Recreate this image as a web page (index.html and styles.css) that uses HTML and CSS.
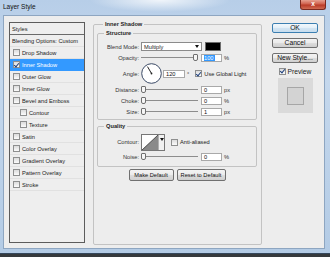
FILE: index.html
```html
<!DOCTYPE html>
<html lang="en">
<head>
  <meta charset="UTF-8">
  <title>Layer Style</title>
  <link rel="stylesheet" href="styles.css">
</head>
<body>
  <div class="window">
    <div class="titlebar">
      <span class="title">Layer Style</span>
      <span class="close">x</span>
    </div>

    <div class="client">
      <ul class="styles-list">
        <li class="head top">Styles</li>
        <li class="head">Blending Options: Custom</li>
        <li><span class="cb"></span>Drop Shadow</li>
        <li class="active"><span class="cb checked"></span>Inner Shadow</li>
        <li><span class="cb"></span>Outer Glow</li>
        <li><span class="cb"></span>Inner Glow</li>
        <li><span class="cb"></span>Bevel and Emboss</li>
        <li class="sub"><span class="cb"></span>Contour</li>
        <li class="sub"><span class="cb"></span>Texture</li>
        <li><span class="cb"></span>Satin</li>
        <li><span class="cb"></span>Color Overlay</li>
        <li><span class="cb"></span>Gradient Overlay</li>
        <li><span class="cb"></span>Pattern Overlay</li>
        <li><span class="cb"></span>Stroke</li>
      </ul>

      <fieldset class="panel">
        <legend>Inner Shadow</legend>

        <fieldset class="group structure">
          <legend>Structure</legend>
          <div class="row">
            <span class="lbl">Blend Mode:</span>
            <div class="select">Multiply</div>
            <div class="color"></div>
          </div>
          <div class="row">
            <span class="lbl">Opacity:</span>
            <div class="slider end"><span class="thumb"></span></div>
            <div class="field"><span class="sel">100</span></div>
            <span class="unit">%</span>
          </div>
          <div class="row angle-row">
            <span class="lbl">Angle:</span>
            <svg class="dial" width="21" height="21" viewBox="0 0 21 21">
              <circle cx="10.5" cy="10.5" r="9.8" fill="#fff" stroke="#3b4a66" stroke-width="1"/>
              <line x1="10.5" y1="10.5" x2="6.5" y2="3.6" stroke="#222" stroke-width="1"/>
              <circle cx="10.5" cy="10.5" r="0.9" fill="#222"/>
            </svg>
            <div class="field angle">120</div>
            <span class="unit">°</span>
            <label class="check global"><span class="cb checked"></span>Use Global Light</label>
          </div>
          <div class="row">
            <span class="lbl">Distance:</span>
            <div class="slider"><span class="thumb"></span></div>
            <div class="field">0</div>
            <span class="unit">px</span>
          </div>
          <div class="row">
            <span class="lbl">Choke:</span>
            <div class="slider"><span class="thumb"></span></div>
            <div class="field">0</div>
            <span class="unit">%</span>
          </div>
          <div class="row">
            <span class="lbl">Size:</span>
            <div class="slider"><span class="thumb"></span></div>
            <div class="field">1</div>
            <span class="unit">px</span>
          </div>
        </fieldset>

        <fieldset class="group quality">
          <legend>Quality</legend>
          <div class="row contour-row">
            <span class="lbl">Contour:</span>
            <div class="contour">
              <svg width="16" height="15" viewBox="0 0 16 15">
                <polygon points="0,15 16,0 16,15" fill="#8a8a8a"/>
                <line x1="0" y1="15" x2="16" y2="0" stroke="#333" stroke-width="0.8"/>
              </svg>
              <span class="drop"></span>
            </div>
            <label class="check anti"><span class="cb"></span>Anti-aliased</label>
          </div>
          <div class="row">
            <span class="lbl">Noise:</span>
            <div class="slider"><span class="thumb"></span></div>
            <div class="field">0</div>
            <span class="unit">%</span>
          </div>
        </fieldset>

        <div class="defaults">
          <button class="make">Make Default</button>
          <button class="reset">Reset to Default</button>
        </div>
      </fieldset>

      <div class="actions">
        <button class="default">OK</button>
        <button>Cancel</button>
        <button>New Style...</button>
        <label class="check preview"><span class="cb checked"></span>Preview</label>
        <div class="swatch"><div class="swatch-inner"></div></div>
      </div>
    </div>
  </div>
</body>
</html>
```

FILE: styles.css
```css
* {
  margin: 0;
  padding: 0;
  box-sizing: border-box;
}

body {
  width: 330px;
  height: 257px;
  overflow: hidden;
  background: #35393c;
  font-family: 'Liberation Sans', Arial, sans-serif;
  font-size: 5.7px;
  color: #222;
}

.window {
  height: 254px;
  background: linear-gradient(to bottom, #b7cee8 0, #c5d8ed 30%, #b3cbe5 100%);
  border-bottom: 1px solid #34475c;
}

.titlebar {
  height: 15px;
  display: flex;
  justify-content: space-between;
  align-items: flex-start;
  padding-left: 3px;
  background: radial-gradient(ellipse 70px 12px at 160px 0, rgba(255,255,255,0.8), rgba(255,255,255,0));
}

.title {
  font-size: 6.5px;
  line-height: 14px;
  color: #111;
}

.close {
  width: 26px;
  height: 10px;
  margin-right: 4px;
  background: linear-gradient(to bottom, #e6a090 0, #d0614d 45%, #b93b27 55%, #cf6a52 100%);
  border: 1px solid #7b2a1f;
  border-top: none;
  border-radius: 0 0 3px 3px;
  color: #fff;
  font-size: 6.5px;
  font-weight: bold;
  line-height: 8px;
  text-align: center;
}

.client {
  margin-left: 3px;
  width: 322px;
  height: 234px;
  background: #ededed;
  border: 1px solid #8ea6c1;
  display: flex;
  align-items: flex-start;
  padding-top: 4px;
}

/* left list of effects */
.styles-list {
  list-style: none;
  margin: 2px 0 0 5px;
  width: 76px;
  height: 221px;
  border: 1px solid #5c5c5c;
  background: #eeeeee;
}

.styles-list li {
  height: 12px;
  display: flex;
  align-items: center;
  gap: 2px;
  padding-left: 3px;
  border-bottom: 1px solid #e1e1e1;
  white-space: nowrap;
}

.styles-list li.head {
  padding-left: 2px;
}

.styles-list li.top {
  border-bottom-color: #6a6a6a;
}

.styles-list li.sub {
  padding-left: 10px;
}

.styles-list li.active {
  background: #3399ff;
  color: #fff;
  border-bottom-color: #3399ff;
}

.cb {
  flex: none;
  width: 7px;
  height: 7px;
  border: 1px solid #8e8f8f;
  background: linear-gradient(to bottom, #dcdcdc, #fbfbfb);
  display: flex;
  align-items: center;
  justify-content: center;
}

.cb.checked::after {
  content: '';
  width: 2px;
  height: 4px;
  margin-top: -1px;
  border-right: 1px solid #1d3f7c;
  border-bottom: 1px solid #1d3f7c;
  transform: rotate(40deg);
}

/* middle panel */
.panel {
  margin-left: 8px;
  width: 169px;
  height: 225px;
  min-inline-size: 0;
  border: 1px solid #c3c3c3;
  border-radius: 2px;
  padding: 0 4px 0 3px;
}

legend {
  font-weight: bold;
  line-height: 8px;
  padding: 0 2px;
  margin-left: 6px;
  color: #1e1e1e;
}

.group {
  min-inline-size: 0;
  border: 1px solid #c3c3c3;
  border-radius: 2px;
}

.structure {
  margin-top: 1px;
  padding: 4px 0 2px;
}

.quality {
  margin-top: 2px;
  padding: 3px 0 4px;
}

.row {
  display: flex;
  align-items: center;
  height: 11px;
  white-space: nowrap;
}

.row.angle-row {
  height: 21px;
}

.row.contour-row {
  height: 18px;
}

.lbl {
  width: 41px;
  margin-right: 2px;
  text-align: right;
  color: #333;
}

.select {
  width: 61px;
  height: 9px;
  border: 1px solid #8b8b8b;
  background: #fff;
  padding: 0 2px;
  display: flex;
  align-items: center;
  justify-content: space-between;
}

.select::after {
  content: '';
  border-left: 2px solid transparent;
  border-right: 2px solid transparent;
  border-top: 3px solid #111;
}

.color {
  margin-left: 3px;
  width: 16px;
  height: 9px;
  background: #000;
  border: 1px solid #6d6d6d;
}

.slider {
  width: 57px;
  height: 7px;
  display: flex;
  align-items: center;
  background: linear-gradient(#8d8d8d, #8d8d8d) no-repeat center / 100% 1px;
}

.slider.end {
  justify-content: flex-end;
}

.thumb {
  width: 5px;
  height: 7px;
  border: 1px solid #6f6f6f;
  border-radius: 1px 1px 2px 2px;
  background: #f6f6f6;
}

.field {
  margin-left: 3px;
  width: 21px;
  height: 8px;
  border: 1px solid #a9a9a9;
  background: #fff;
  padding-left: 2px;
  line-height: 6px;
  color: #111;
}

.field .sel {
  display: inline-block;
  background: #3399ff;
  color: #fff;
  padding-right: 1px;
}

.field.angle {
  margin-left: 1px;
  width: 22px;
}

.unit {
  margin-left: 2px;
  color: #333;
}

.dial {
  display: block;
}

.check {
  display: flex;
  align-items: center;
  gap: 2px;
  color: #222;
}

.check.global {
  margin-left: 6px;
}

.check.anti {
  margin-left: 6px;
}

.contour {
  width: 24px;
  height: 17px;
  border: 1px solid #777;
  background: #fff;
  display: flex;
}

.contour svg {
  display: block;
}

.contour .drop {
  flex: 1;
  border-left: 1px solid #b0b0b0;
  background: #f0f0f0;
  display: flex;
  justify-content: center;
  padding-top: 3px;
}

.contour .drop::after {
  content: '';
  height: 0;
  border-left: 2px solid transparent;
  border-right: 2px solid transparent;
  border-top: 3px solid #111;
}

button {
  font-family: inherit;
  font-size: 5.7px;
  color: #111;
  border: 1px solid #707070;
  border-radius: 2px;
  background: linear-gradient(to bottom, #f3f3f3 0, #ebebeb 50%, #dddddd 51%, #cfcfcf 100%);
}

.defaults {
  display: flex;
  justify-content: center;
  gap: 3px;
  margin-top: 2px;
}

.defaults button {
  height: 12px;
}

.defaults .make {
  width: 45px;
}

.defaults .reset {
  width: 49px;
}

/* right column */
.actions {
  margin: 3px 0 0 10px;
  width: 46px;
  display: flex;
  flex-direction: column;
  align-items: center;
}

.actions button {
  width: 46px;
  height: 10px;
  font-size: 6.7px;
  line-height: 8px;
  margin-bottom: 5px;
}

.actions button.default {
  border-color: #3c7fb1;
  background: linear-gradient(to bottom, #f2f8fc 0, #e3eff8 50%, #d3e5f3 51%, #c7ddee 100%);
}

.check.preview {
  margin-top: -2px;
  height: 10px;
  font-size: 6.7px;
}

.swatch {
  margin-top: 2px;
  width: 35px;
  height: 35px;
  background: #dadada;
  display: flex;
  align-items: center;
  justify-content: center;
}

.swatch-inner {
  width: 17px;
  height: 18px;
  background: #d3d3d3;
  border: 1px solid #a6a6a6;
}
```
